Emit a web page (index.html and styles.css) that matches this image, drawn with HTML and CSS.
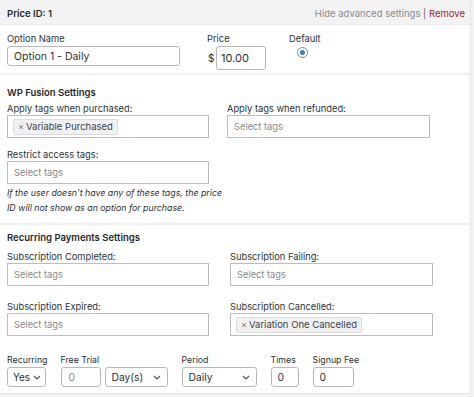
FILE: index.html
```html
<!DOCTYPE html>
<html>
<head>
<meta charset="utf-8">
<link rel="stylesheet" href="styles.css">
</head>
<body>
<div class="panel">
  <div class="header">
    <span class="pid">Price ID: 1</span>
    <span class="actions"><span class="hide">Hide advanced settings</span> <span class="sep">|</span> <span class="remove">Remove</span></span>
  </div>

  <div class="toprow">
    <div class="col-name">
      <div class="lbl">Option Name</div>
      <div class="input name-input">Option 1 - Daily</div>
    </div>
    <div class="col-price">
      <div class="lbl">Price</div>
      <div class="price-wrap"><span class="dollar">$</span><div class="input price-input">10.00</div></div>
    </div>
    <div class="col-default">
      <div class="lbl">Default</div>
      <div class="radio"><span class="dot"></span></div>
    </div>
  </div>

  <div class="section sec-fusion">
    <div class="heading">WP Fusion Settings</div>
    <div class="grid grid-a">
      <div class="field">
        <div class="lbl">Apply tags when purchased:</div>
        <div class="input tags"><span class="chip"><span class="x">×</span>Variable Purchased</span></div>
      </div>
      <div class="field">
        <div class="lbl">Apply tags when refunded:</div>
        <div class="input tags"><span class="ph">Select tags</span></div>
      </div>
      <div class="field field-gap">
        <div class="lbl">Restrict access tags:</div>
        <div class="input tags"><span class="ph">Select tags</span></div>
        <p class="note">If the user doesn't have any of these tags, the price<br>ID will not show as an option for purchase.</p>
      </div>
    </div>
  </div>

  <div class="section sec-recur">
    <div class="heading">Recurring Payments Settings</div>
    <div class="grid grid-b">
      <div class="field">
        <div class="lbl">Subscription Completed:</div>
        <div class="input tags"><span class="ph">Select tags</span></div>
      </div>
      <div class="field">
        <div class="lbl">Subscription Failing:</div>
        <div class="input tags"><span class="ph">Select tags</span></div>
      </div>
      <div class="field field-gap2">
        <div class="lbl">Subscription Expired:</div>
        <div class="input tags"><span class="ph">Select tags</span></div>
      </div>
      <div class="field field-gap2">
        <div class="lbl">Subscription Cancelled:</div>
        <div class="input tags"><span class="chip"><span class="x">×</span>Variation One Cancelled</span></div>
      </div>
    </div>

    <div class="bottom">
      <div class="bf f-rec">
        <div class="lbl">Recurring</div>
        <div class="input select sel-yes"><span>Yes</span><svg class="chev" width="8" height="5" viewBox="0 0 8 5"><path d="M1 1l3 3 3-3" fill="none" stroke="#555" stroke-width="1.2"/></svg></div>
      </div>
      <div class="bf f-trial">
        <div class="lbl">Free Trial</div>
        <div class="trial-row">
          <div class="input num trial-in"><span class="ph">0</span></div>
          <div class="input select sel-day"><span>Day(s)</span><svg class="chev" width="8" height="5" viewBox="0 0 8 5"><path d="M1 1l3 3 3-3" fill="none" stroke="#555" stroke-width="1.2"/></svg></div>
        </div>
      </div>
      <div class="bf f-period">
        <div class="lbl">Period</div>
        <div class="input select sel-period"><span>Daily</span><svg class="chev" width="8" height="5" viewBox="0 0 8 5"><path d="M1 1l3 3 3-3" fill="none" stroke="#555" stroke-width="1.2"/></svg></div>
      </div>
      <div class="bf f-times">
        <div class="lbl">Times</div>
        <div class="input num times-in">0</div>
      </div>
      <div class="bf f-fee">
        <div class="lbl">Signup Fee</div>
        <div class="input num fee-in">0</div>
      </div>
    </div>
  </div>
</div>
</body>
</html>
```

FILE: styles.css
```css
* { box-sizing: border-box; }
html, body { margin: 0; padding: 0; }
body {
  background: #f3f3f3;
  font-family: Inter, "Noto Sans", "Liberation Sans", sans-serif;
  font-size: 9.3px;
  color: #2c3338;
  width: 474px;
  height: 397px;
  overflow: hidden;
}
.panel {
  width: 471px;
  height: 394px;
  background: #fff;
  border-right: 1px solid #e4e4e4;
  border-bottom: 1px solid #e4e4e4;
}
.header {
  height: 25px;
  background: #f3f3f4;
  border-bottom: 1px solid #ebebeb;
  display: flex;
  align-items: center;
  justify-content: space-between;
  padding: 2px 5px 0 7px;
}
.pid { font-weight: 600; color: #23282d; font-size: 9.5px; }
.actions { font-size: 9.5px; }
.hide { color: #8a8a8a; }
.sep { color: #666; }
.remove { color: #a92525; }

.lbl { line-height: 12px; height: 12px; color: #2c3338; white-space: nowrap; }

.input {
  border: 1px solid #b9b9b9;
  border-radius: 3px;
  background: #fff;
  display: flex;
  align-items: center;
  color: #2c3338;
}

.toprow {
  display: flex;
  padding: 8px 7px 0;
  height: 48px;
}
.col-name { width: 173px; }
.col-name .lbl { margin-bottom: 1px; }
.name-input { height: 20px; padding-left: 6px; font-size: 10.5px; }
.col-price { margin-left: 27px; }
.col-price .lbl { margin-bottom: 1px; }
.price-wrap { display: flex; align-items: center; }
.dollar { width: 9px; font-size: 10px; color: #2c3338; padding-left: 1px; }
.price-input { width: 50px; height: 24px; padding-left: 4px; font-size: 11px; }
.col-default { margin-left: 23px; }
.radio {
  width: 11px; height: 11px;
  border: 1px solid #8c8f94;
  border-radius: 50%;
  margin: 2px 0 0 8px;
  display: flex; align-items: center; justify-content: center;
}
.dot { width: 5px; height: 5px; border-radius: 50%; background: #3a80b5; }

.section { border-top: 2px solid #f0f0f1; padding: 0 7px; }
.sec-fusion { padding-top: 10px; height: 150px; }
.sec-recur { padding-top: 6px; }
.heading { font-weight: 600; font-size: 9.5px; color: #23282d; line-height: 15px; height: 13px; margin-bottom: 3px; }
.sec-recur .heading { margin-bottom: 5px; line-height: 14px; }

.grid { display: grid; grid-template-columns: 202px 203px; }
.grid-a { column-gap: 18px; }
.grid-b { column-gap: 21px; }
.field .lbl { margin-bottom: 2px; line-height: 16px; }
.tags { height: 23px; padding-left: 5px; border-radius: 0; border-color: #bdbdbd; }
.ph { color: #8a8a8a; padding-left: 1px; }
.chip {
  display: inline-flex; align-items: center;
  height: 16px;
  background: #f1f1f1;
  border: 1px solid #dcdcdc;
  border-radius: 2px;
  padding: 0 4px 0 4px;
  color: #3c434a;
  font-size: 9.5px;
}
.x { color: #777; margin-right: 2px; font-size: 9px; }
.field-gap { margin-top: 9px; }
.field-gap2 { margin-top: 13px; }
.note { margin: 1px 0 0; font-style: italic; font-size: 8.8px; line-height: 15px; white-space: nowrap; color: #2c3338; }

.bottom { display: flex; margin-top: 16px; }
.bf .lbl { margin-bottom: 3px; font-size: 8.8px; line-height: 16px; }
.select { height: 20px; justify-content: space-between; padding: 0 6px 0 6px; font-size: 10.3px; }
.num { height: 20px; padding-left: 6px; font-size: 10.3px; }
.f-rec .sel-yes { width: 39px; padding-left: 5px; padding-right: 4px; gap: 3px; font-size: 10px; }
.f-trial { margin-left: 13px; }
.trial-row { display: flex; gap: 4px; }
.trial-in { width: 40px; }
.sel-day { width: 63px; }
.f-period { margin-left: 14px; }
.sel-period { width: 75px; }
.f-times { margin-left: 14px; }
.times-in { width: 28px; }
.f-fee { margin-left: 14px; }
.fee-in { width: 41px; }
.chev { flex: none; }
```
